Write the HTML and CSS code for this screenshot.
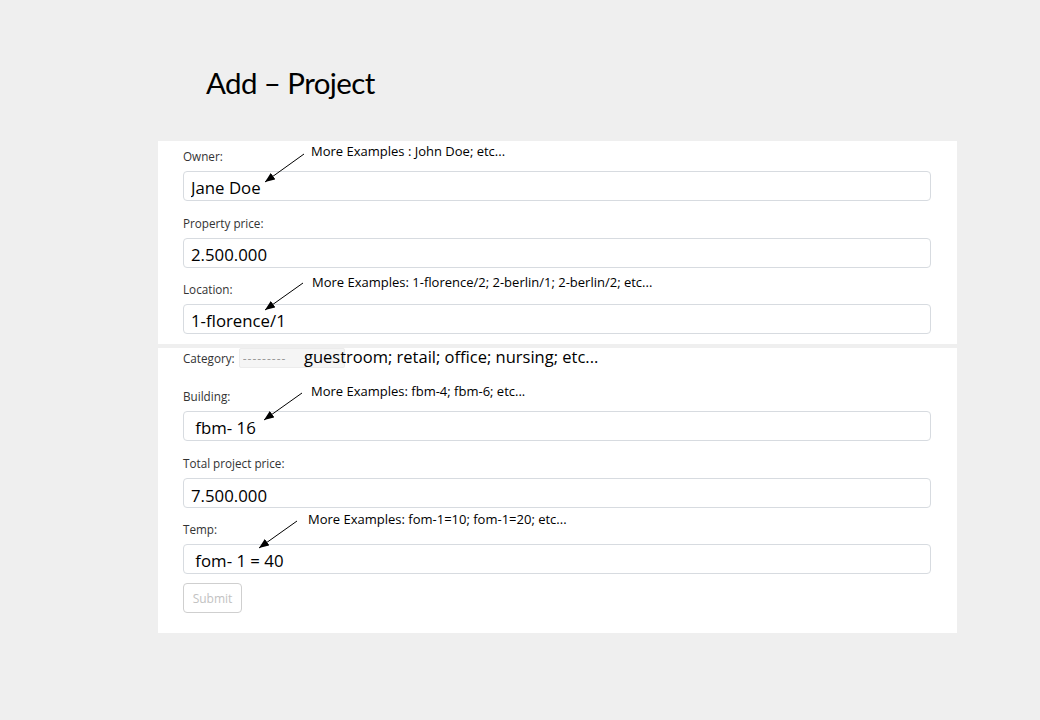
FILE: index.html
```html
<!DOCTYPE html>
<html lang="en">
<head>
<meta charset="utf-8">
<title>Add – Project</title>
<link rel="stylesheet" href="styles.css">
</head>
<body>
<h1 class="title">Add – Project</h1>
<form class="panel">
  <div class="section section-top">
    <div class="field">
      <label class="label">Owner:</label>
      <input class="input" type="text" value="Jane Doe">
    </div>
    <div class="field">
      <label class="label">Property price:</label>
      <input class="input" type="text" value="2.500.000">
    </div>
    <div class="field">
      <label class="label">Location:</label>
      <input class="input" type="text" value="1-florence/1">
    </div>
  </div>
  <div class="section section-bottom">
    <div class="category-row">
      <label class="label">Category:</label>
      <select class="select"><option>---------</option></select>
      <span class="category-note">guestroom; retail; office; nursing; etc...</span>
    </div>
    <div class="field field-building">
      <label class="label">Building:</label>
      <input class="input" type="text" value=" fbm- 16">
    </div>
    <div class="field field-total">
      <label class="label">Total project price:</label>
      <input class="input input-low" type="text" value="7.500.000">
    </div>
    <div class="field field-temp">
      <label class="label">Temp:</label>
      <input class="input" type="text" value=" fom- 1 = 40">
    </div>
    <button class="submit" type="button" disabled>Submit</button>
  </div>
</form>

<div class="annotations">
  <span class="note note-1">More Examples : John Doe; etc...</span>
  <span class="note note-2">More Examples: 1-florence/2; 2-berlin/1; 2-berlin/2; etc...</span>
  <span class="note note-3">More Examples: fbm-4; fbm-6; etc...</span>
  <span class="note note-4">More Examples: fom-1=10; fom-1=20; etc...</span>
  <svg class="arrows" width="1040" height="720" viewBox="0 0 1040 720">
    <defs>
      <marker id="head" markerUnits="userSpaceOnUse" markerWidth="10" markerHeight="8" refX="10" refY="4" orient="auto">
        <polygon points="0 0, 10 4, 0 8" fill="#000"/>
      </marker>
    </defs>
    <line x1="304" y1="154" x2="265" y2="182" stroke="#000" stroke-width="1" marker-end="url(#head)"/>
    <line x1="303" y1="283" x2="265" y2="310" stroke="#000" stroke-width="1" marker-end="url(#head)"/>
    <line x1="302" y1="393" x2="264" y2="420" stroke="#000" stroke-width="1" marker-end="url(#head)"/>
    <line x1="297" y1="521" x2="259" y2="548" stroke="#000" stroke-width="1" marker-end="url(#head)"/>
  </svg>
</div>
</body>
</html>
```
FILE: styles.css
```css
* { box-sizing: border-box; }

body {
  margin: 0;
  width: 1040px;
  height: 720px;
  overflow: hidden;
  position: relative;
  background: #efefef;
  font-family: "Open Sans", "Noto Sans", sans-serif;
  color: #000;
}

.title {
  margin: 0;
  padding: 63px 0 0 206px;
  font-family: Lato, "Open Sans", sans-serif;
  font-weight: 400;
  font-size: 29.5px;
  letter-spacing: -0.6px;
  line-height: 40px;
  color: #000;
}

.panel {
  margin: 38px 0 0 158px;
  width: 799px;
  display: flex;
  flex-direction: column;
  gap: 4px;
}

.section {
  background: #fff;
  padding: 0 26px 0 25px;
  display: flex;
  flex-direction: column;
}

.section-top {
  padding-top: 6px;
  padding-bottom: 10px;
  gap: 12.5px;
}

.section-bottom {
  padding-bottom: 20px;
}

.field {
  display: flex;
  flex-direction: column;
}

.label {
  font-size: 11.7px;
  line-height: 18px;
  color: #333;
  margin-bottom: 6px;
}

.input {
  height: 30px;
  width: 100%;
  border: 1px solid #d7dbe0;
  border-radius: 4px;
  padding: 3px 7px 0;
  font-family: "Open Sans", "Noto Sans", sans-serif;
  font-size: 16.8px;
  color: #000;
  background: #fff;
  outline: none;
}

.input-low { padding-top: 5px; }

.category-row {
  position: relative;
  height: 20px;
  display: flex;
  align-items: center;
  gap: 4px;
  margin-bottom: 19px;
}

.category-row .label { margin-bottom: 0; }

.select {
  appearance: none;
  -webkit-appearance: none;
  width: 106px;
  height: 20px;
  border: 1px solid #ececec;
  border-radius: 2px;
  background: #f5f5f5;
  color: #999;
  font-family: "Open Sans", sans-serif;
  font-size: 12px;
  letter-spacing: 1px;
  padding: 0 0 0 3px;
}

.category-note {
  position: absolute;
  left: 121px;
  top: -2px;
  font-size: 16.5px;
  line-height: 22px;
  color: #000;
  white-space: nowrap;
}

.field-building { margin-bottom: 13px; }
.field-total { margin-bottom: 12px; }
.field-temp { margin-bottom: 9px; }

.submit {
  align-self: flex-start;
  width: 59px;
  height: 30px;
  border: 1px solid #cfcfcf;
  border-radius: 4px;
  background: #fff;
  color: #c2c2c2;
  font-family: "Open Sans", sans-serif;
  font-size: 12px;
  padding: 0;
}

.annotations {
  position: absolute;
  left: 0;
  top: 0;
  width: 1040px;
  height: 720px;
  pointer-events: none;
}

.arrows {
  position: absolute;
  left: 0;
  top: 0;
}

.note {
  position: absolute;
  font-size: 13px;
  line-height: 16px;
  white-space: nowrap;
  color: #000;
}

.note-1 { left: 311px; top: 143px; }
.note-2 { left: 312px; top: 274px; }
.note-3 { left: 311px; top: 383px; }
.note-4 { left: 308px; top: 511px; }
```
